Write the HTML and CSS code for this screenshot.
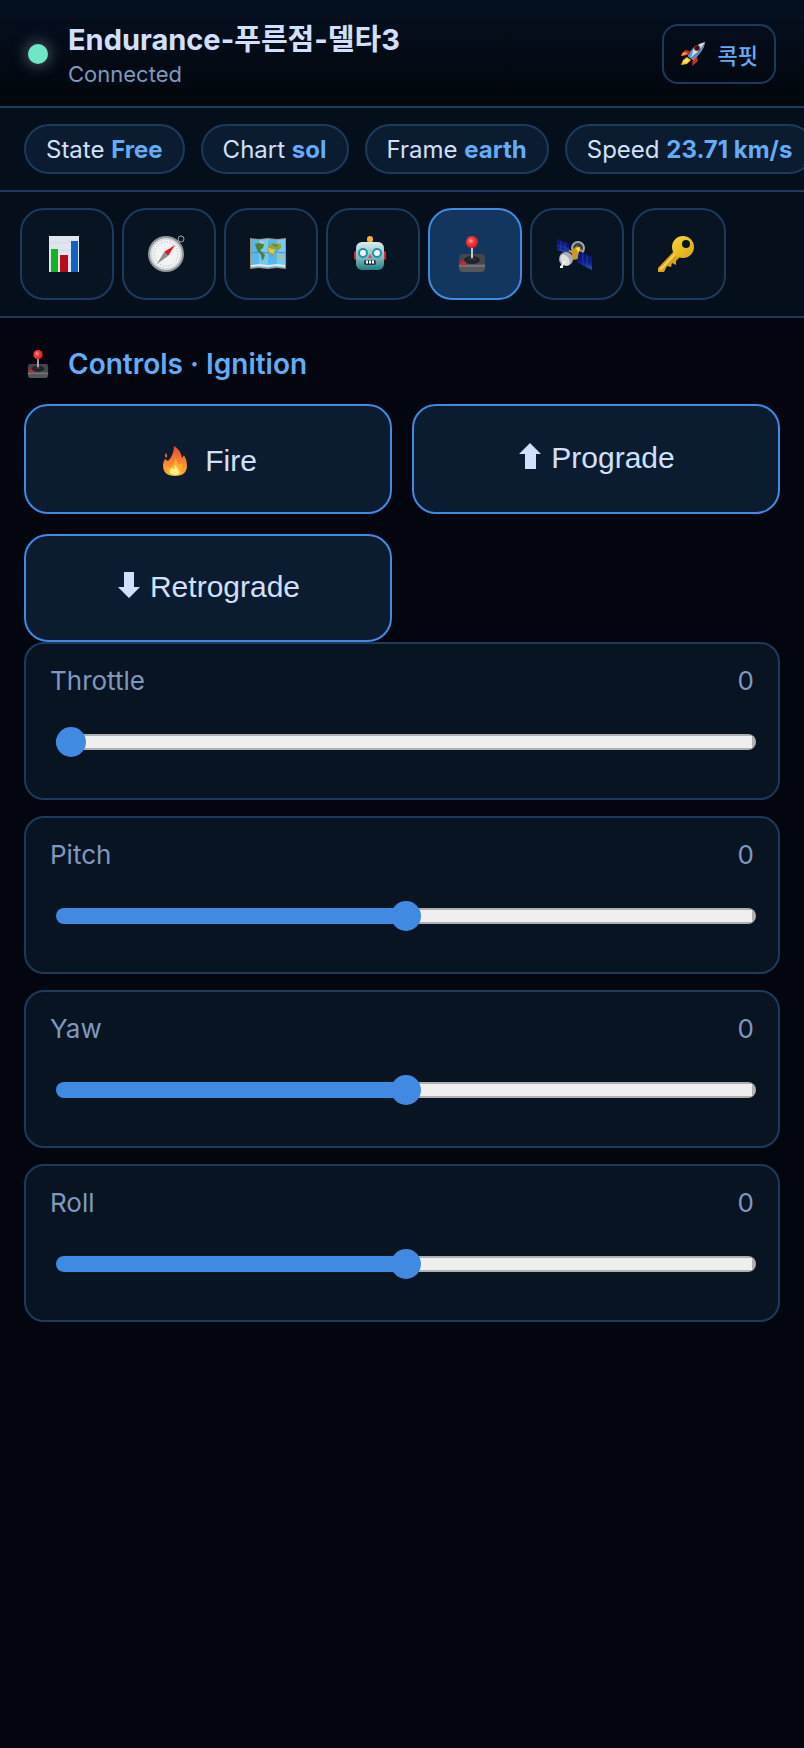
FILE: index.html
```
<!DOCTYPE html>
<html lang="ko">
<head>
    <meta charset="UTF-8">
    <meta name="viewport" content="width=device-width, initial-scale=1.0">
    <title>Endurance Cockpit</title>
    <link rel="stylesheet" href="styles.css">
</head>
<body>
    <!-- Shared icons -->
    <svg class="icon-defs" aria-hidden="true">
        <defs>
            <linearGradient id="gFire" x1="0" y1="0" x2="0" y2="1">
                <stop offset="0" stop-color="#e8472c"/>
                <stop offset="0.6" stop-color="#fb8a33"/>
                <stop offset="1" stop-color="#ffb52e"/>
            </linearGradient>
            <radialGradient id="gBall" cx="0.4" cy="0.4" r="0.6">
                <stop offset="0" stop-color="#ffb0b0"/>
                <stop offset="0.4" stop-color="#fb3b3f"/>
                <stop offset="1" stop-color="#d81a22"/>
            </radialGradient>
            <linearGradient id="gRobot" x1="0" y1="0" x2="0" y2="1">
                <stop offset="0" stop-color="#d8eeee"/>
                <stop offset="0.55" stop-color="#86b9bc"/>
                <stop offset="1" stop-color="#1f7f86"/>
            </linearGradient>
            <linearGradient id="gKey" x1="0" y1="0" x2="1" y2="1">
                <stop offset="0" stop-color="#f6d936"/>
                <stop offset="1" stop-color="#d9a514"/>
            </linearGradient>
            <linearGradient id="gPanel" x1="0" y1="0" x2="0" y2="1">
                <stop offset="0" stop-color="#0a1275"/>
                <stop offset="0.6" stop-color="#0d1c8c"/>
                <stop offset="1" stop-color="#2a5fb8"/>
            </linearGradient>
            <symbol id="joystick" viewBox="0 0 36 36">
                <rect x="5" y="18" width="26" height="13" rx="3" fill="#45464b"/>
                <path d="M5 28h26v4q0 4-4 4H9q-4 0-4-4z" fill="#55565a"/>
                <path d="M5 30h26" stroke="#8b8c90"/>
                <ellipse cx="18" cy="24" rx="8" ry="4" fill="#222328"/>
                <path d="M14 24q3-2 3-5h2q0 3 3 5z" fill="#36373c"/>
                <rect x="17" y="10" width="2" height="12" fill="#c5c7cc"/>
                <circle cx="18" cy="6" r="6" fill="url(#gBall)"/>
                <ellipse cx="9" cy="27" rx="3" ry="2" fill="#dd1e26"/>
            </symbol>
        </defs>
    </svg>

    <header class="header">
        <span class="status-dot"></span>
        <div class="ship">
            <h1>Endurance-푸른점-델타3</h1>
            <p>Connected</p>
        </div>
        <button class="cockpit-btn" type="button">
            <svg class="rocket" viewBox="0 0 26 24" aria-hidden="true">
                <path d="M10 9 5 8 1 14l7-1zM17 15l1 4-6 5 1-7z" fill="#d92a1e"/>
                <path d="M3 10l5 1-3 2-4 1z" fill="#f5922a"/>
                <path d="M7 15 3 18l-2 5 6-1 4-4z" fill="#f9c22d"/>
                <path d="M6 17l-3 4 4-1 2-2z" fill="#ffee80"/>
                <path d="M8 14Q14 2 25 0q-1 9-12 18z" fill="#d6dde4"/>
                <path d="M13 18Q24 9 25 0q-5 9-15 16z" fill="#5d86b4"/>
                <path d="M8 14q2-5 6-9l-2 8-2 3z" fill="#5a93cf"/>
                <circle cx="17" cy="6" r="3" fill="#7c1f22"/>
                <circle cx="17" cy="6" r="2" fill="#2a1620"/>
            </svg>
            콕핏
        </button>
    </header>

    <div class="status-bar">
        <span class="pill">State <b>Free</b></span>
        <span class="pill">Chart <b>sol</b></span>
        <span class="pill">Frame <b>earth</b></span>
        <span class="pill">Speed <b>23.71 km/s</b></span>
    </div>

    <nav class="tabs">
        <button class="tab" type="button" aria-label="Status">
            <svg viewBox="0 0 36 36" aria-hidden="true">
                <rect x="3" width="30" height="36" fill="#dfe6ef"/>
                <path d="M4 7h28M4 14h28M4 21h28M4 28h28" stroke="#d0d9e5"/>
                <rect x="5" y="13" width="7" height="23" fill="#0fb624"/>
                <rect x="14" y="19" width="8" height="17" fill="#b80d16"/>
                <rect x="25" y="5" width="7" height="31" fill="#1261c4"/>
            </svg>
        </button>
        <button class="tab" type="button" aria-label="Navigation">
            <svg viewBox="0 0 36 36" aria-hidden="true">
                <circle cx="33" cy="3" r="3" fill="none" stroke="#98a2a8"/>
                <circle cx="18" cy="18" r="18" fill="#8f969c"/>
                <circle cx="18" cy="18" r="16" fill="#d5d9db"/>
                <circle cx="18" cy="18" r="14" fill="#f3f3f3"/>
                <circle cx="18" cy="18" r="12" fill="none" stroke="#a7abae" stroke-dasharray="1 2"/>
                <path d="M27 9 16 16l4 4z" fill="#dd1920"/>
                <path d="M9 28l7-12 4 4z" fill="#8a8d90"/>
            </svg>
        </button>
        <button class="tab" type="button" aria-label="Map">
            <svg viewBox="0 0 36 36" aria-hidden="true">
                <path d="M0 2 9 3 18 2l9 1 9-1v31l-9-1-9 1-9-1-9 1z" fill="#a98f70"/>
                <path d="M1 3l8 1v27l-8 1zM18 3l9 1v27l-9 1z" fill="#56b8ec"/>
                <path d="M9 4l9-1v29l-9-1zM27 4l8-1v29l-8-1z" fill="#79c8f0"/>
                <path d="M1 29l8-1 9 1 9-1 8 1v2l-8-1-9 1-9-1-8 1z" fill="#d6edf2"/>
                <path d="M1 17l8-1 9 1 9-1 8 1" fill="none" stroke="#4b95bd"/>
                <path d="M5 8l4-1 5 1-1 4-3 2 3 3 2 2-1 3-2 3-1-6-4-5z" fill="#4f7f2c"/>
                <path d="M10 5l5 1-2 2-3-1z" fill="#b9c9c0"/>
                <path d="M19 9l4-2 8 1v4l-4 3-2-3-3 2 2 2-2 6-2-6-3-2z" fill="#93a336"/>
                <path d="M18 12l5 1 2 2-2 3-4-2z" fill="#e7c836"/>
                <path d="M22 8l6 1-1 2-4-1z" fill="#5d8c32"/>
                <path d="M28 20l4-1 1 3-3 1z" fill="#cbb95a"/>
            </svg>
        </button>
        <button class="tab" type="button" aria-label="Autopilot">
            <svg viewBox="0 0 36 36" aria-hidden="true">
                <rect x="2" y="15" width="4" height="9" rx="2" fill="#c92f35"/>
                <rect x="30" y="15" width="4" height="9" rx="2" fill="#c92f35"/>
                <rect x="15" y="3" width="6" height="5" fill="#82568a"/>
                <circle cx="18" cy="3" r="3" fill="#f4b62c"/>
                <rect x="4" y="6" width="28" height="28" rx="6" fill="url(#gRobot)"/>
                <circle cx="11" cy="17" r="4" fill="#fff" stroke="#1496ad" stroke-width="2"/>
                <circle cx="25" cy="17" r="4" fill="#fff" stroke="#1496ad" stroke-width="2"/>
                <path d="M18 18l2 4h-4z" fill="#e14444"/>
                <rect x="12" y="24" width="12" height="5" rx="2" fill="#273c42"/>
                <path d="M14 26h9" stroke="#fff" stroke-width="3" stroke-dasharray="2 1"/>
            </svg>
        </button>
        <button class="tab active" type="button" aria-label="Controls">
            <svg aria-hidden="true"><use href="#joystick"/></svg>
        </button>
        <button class="tab" type="button" aria-label="Satellite">
            <svg viewBox="0 0 36 36" aria-hidden="true">
                <circle cx="22" cy="12" r="6" fill="#3d4249" stroke="#a5aab0" stroke-width="2"/>
                <path d="M12 14l12 7" stroke="#bca96a" stroke-width="2"/>
                <path d="M16 14l5-4 5 4-3 9-7 1z" fill="#c99a1d"/>
                <path d="M20 12l4-1-1 7z" fill="#ffe344"/>
                <path d="M1 3l12 5v10L1 14z" fill="url(#gPanel)"/>
                <path d="M23 15l13 6v13l-15-8z" fill="url(#gPanel)"/>
                <path d="M5 5v10M9 7v10M1 9l12 4M27 17v12M31 19v13" stroke="#4257b0" stroke-width="0.5"/>
                <ellipse cx="10" cy="23" rx="7" ry="7" fill="#a9adb0"/>
                <ellipse cx="9" cy="24" rx="4" ry="6" fill="#dedfdf" transform="rotate(-35 9 24)"/>
                <path d="M9 25l-4 6M4 31h3" stroke="#f4f4f4" stroke-width="2"/>
            </svg>
        </button>
        <button class="tab" type="button" aria-label="Keys">
            <svg viewBox="0 0 36 36" aria-hidden="true">
                <path d="M16 15l6 6-4 4v4l-4-2-1 4-4-1-3 6H0v-4z" fill="#d9a416"/>
                <path d="M17 18 2 34" stroke="#f3d457" stroke-width="2"/>
                <path d="M25 0a11 11 0 1 1 0 22 11 11 0 0 1 0-22zm3 4a4 4 0 1 0 0 8 4 4 0 0 0 0-8z" fill="url(#gKey)" fill-rule="evenodd"/>
            </svg>
        </button>
    </nav>

    <main class="panel">
        <h2>
            <svg class="heading-icon" aria-hidden="true"><use href="#joystick"/></svg>
            Controls · Ignition
        </h2>

        <div class="actions">
            <button class="action fire" type="button">
                <svg class="flame" viewBox="0 0 24 30" aria-hidden="true">
                    <path d="M11 0q7 4 8 12l2-3q3 5 3 10 0 11-12 11T0 19q0-3 2-6l3 2Q11 9 11 0z" fill="url(#gFire)"/>
                    <path d="M3 7q2 2 1 5-4-2-1-5z" fill="#e8552f"/>
                    <path d="M13 11q0 5 3 8l3-2q2 12-7 12Q3 29 4 20l3 2q5-4 6-11z" fill="#ffb033"/>
                    <path d="M12 19q9 10 0 10-8 0-4-7l3 1z" fill="#fff087"/>
                </svg>
                Fire
            </button>
            <button class="action" type="button">
                <svg class="arrow" viewBox="0 0 22 26" aria-hidden="true"><path d="M11 0l11 11h-5v15H6V11H0z"/></svg>
                Prograde
            </button>
            <button class="action" type="button">
                <svg class="arrow" viewBox="0 0 22 26" aria-hidden="true"><path d="M11 26 0 15h6V0h10v15h6z"/></svg>
                Retrograde
            </button>
        </div>

        <div class="sliders">
            <div class="slider-card">
                <div class="slider-head">
                    <label for="throttle">Throttle</label>
                    <output for="throttle">0</output>
                </div>
                <input type="range" id="throttle" min="0" max="100" value="0" style="--fill: 0%">
            </div>
            <div class="slider-card">
                <div class="slider-head">
                    <label for="pitch">Pitch</label>
                    <output for="pitch">0</output>
                </div>
                <input type="range" id="pitch" min="-100" max="100" value="0" style="--fill: 50%">
            </div>
            <div class="slider-card">
                <div class="slider-head">
                    <label for="yaw">Yaw</label>
                    <output for="yaw">0</output>
                </div>
                <input type="range" id="yaw" min="-100" max="100" value="0" style="--fill: 50%">
            </div>
            <div class="slider-card">
                <div class="slider-head">
                    <label for="roll">Roll</label>
                    <output for="roll">0</output>
                </div>
                <input type="range" id="roll" min="-100" max="100" value="0" style="--fill: 50%">
            </div>
        </div>
    </main>

    <script>
        document.querySelectorAll('input[type="range"]').forEach((input) => {
            input.addEventListener('input', () => {
                const pct = (input.value - input.min) / (input.max - input.min) * 100;
                input.style.setProperty('--fill', `${pct}%`);
                document.querySelector(`output[for="${input.id}"]`).value = input.value;
            });
        });
    </script>
</body>
</html>
```
FILE: styles.css
```
:root {
    --bg: #03060e;
    --bar: #050e1b;
    --card: #091423;
    --line: #1c3a5c;
    --accent: #408ae2;
    --link: #62adf8;
    --text: #d2e0ff;
    --muted: #7d99bf;
}

* {
    box-sizing: border-box;
}

body {
    margin: 0;
    min-height: 100vh;
    background: var(--bg);
    color: var(--text);
    font-family: Inter, "Noto Sans CJK KR", sans-serif;
    overflow-x: hidden;
}

button {
    margin: 0;
    font-family: inherit;
    color: inherit;
    cursor: pointer;
}

.icon-defs {
    position: absolute;
    width: 0;
    height: 0;
}

.header {
    display: flex;
    align-items: center;
    min-height: 108px;
    padding: 2px 28px 0;
    background: linear-gradient(#051020, #02060c);
    border-bottom: 2px solid var(--line);
}

.status-dot {
    width: 20px;
    height: 20px;
    margin-right: 20px;
    border-radius: 50%;
    background: #6ee7c7;
    box-shadow: 0 0 16px rgba(210, 224, 255, 0.5);
}

.ship {
    flex: 1;
    padding-top: 4px;
}

.ship h1 {
    margin: 0;
    font-size: 29px;
    line-height: 36px;
    font-weight: 700;
}

.ship p {
    margin: 0;
    font-size: 22px;
    line-height: 32px;
    color: var(--muted);
}

.cockpit-btn {
    display: flex;
    align-items: center;
    gap: 12px;
    height: 60px;
    padding: 0 16px;
    border: 2px solid var(--line);
    border-radius: 16px;
    background: transparent;
    color: var(--link);
    font-size: 22px;
    font-weight: 500;
}

.rocket {
    width: 26px;
    height: 24px;
}

.status-bar {
    display: flex;
    gap: 16px;
    padding: 16px 24px;
    background: var(--bar);
    border-bottom: 2px solid var(--line);
    overflow: hidden;
}

.pill {
    flex: none;
    padding: 1px 20px 0;
    border: 2px solid var(--line);
    border-radius: 25px;
    background: #0b1b30;
    font-size: 24px;
    line-height: 45px;
    white-space: nowrap;
}

.pill b {
    color: var(--link);
    font-weight: 700;
}

.tabs {
    display: flex;
    gap: 8px;
    padding: 16px 20px;
    background: var(--bar);
    border-bottom: 2px solid var(--line);
}

.tab {
    display: flex;
    align-items: center;
    justify-content: center;
    width: 94px;
    height: 92px;
    padding: 0 6px 0 0;
    border: 2px solid var(--line);
    border-radius: 24px;
    background: var(--card);
}

.tab svg {
    width: 36px;
    height: 36px;
    overflow: visible;
}

.tab.active {
    border-color: var(--accent);
    background: #12365d;
}

.panel {
    padding: 24px;
}

.panel h2 {
    display: flex;
    align-items: center;
    gap: 16px;
    margin: 0 0 18px;
    font-size: 28px;
    line-height: 44px;
    font-weight: 600;
    color: var(--link);
}

.heading-icon {
    width: 28px;
    height: 28px;
}

.actions {
    display: grid;
    grid-template-columns: 1fr 1fr;
    gap: 20px;
}

.action {
    display: flex;
    align-items: center;
    justify-content: center;
    gap: 10px;
    min-height: 108px;
    padding: 0 0 2px 2px;
    border: 2px solid var(--accent);
    border-radius: 24px;
    background: #0b1c31;
    font-family: "Liberation Sans", Arial, sans-serif;
    font-size: 30px;
}

.action.fire {
    gap: 18px;
    min-height: 110px;
    padding: 4px 0 0 4px;
}

.flame {
    width: 24px;
    height: 30px;
}

.arrow {
    width: 22px;
    height: 26px;
    margin-bottom: 4px;
    fill: currentColor;
}

.sliders {
    display: flex;
    flex-direction: column;
    gap: 16px;
}

.slider-card {
    padding: 20px 24px 41px;
    border: 2px solid var(--line);
    border-radius: 20px;
    background: var(--card);
}

.slider-head {
    display: flex;
    justify-content: space-between;
    margin-bottom: 29px;
    font-size: 26px;
    line-height: 34px;
    color: var(--muted);
}

input[type="range"] {
    -webkit-appearance: none;
    appearance: none;
    display: block;
    width: calc(100% - 4px);
    height: 30px;
    margin: 0 0 0 6px;
    background: transparent;
    cursor: pointer;
}

/* blue up to the thumb, then light groove with a grey rim */
input[type="range"]::-webkit-slider-runnable-track {
    height: 16px;
    border-radius: 8px;
    background:
        linear-gradient(to right, var(--accent) var(--fill), transparent var(--fill)),
        linear-gradient(#efefef, #efefef) center / calc(100% - 8px) 12px no-repeat,
        #b0b0b0;
}

input[type="range"]::-webkit-slider-thumb {
    -webkit-appearance: none;
    width: 30px;
    height: 30px;
    margin-top: -7px;
    border-radius: 50%;
    background: var(--accent);
}
```
